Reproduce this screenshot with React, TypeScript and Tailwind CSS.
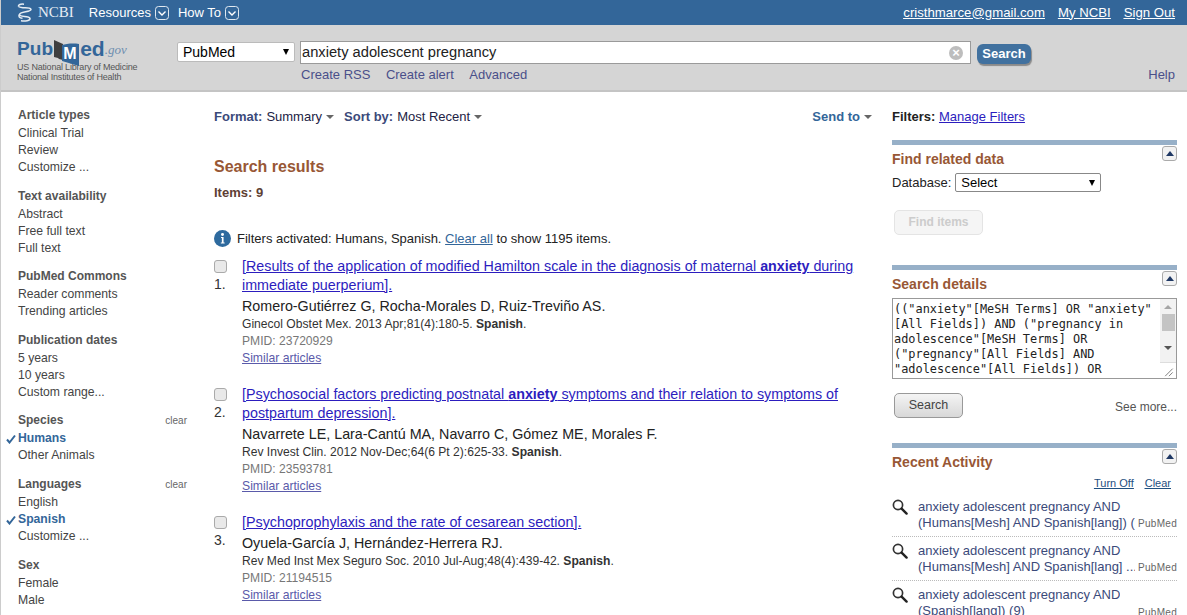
import type { ReactNode } from 'react'

const sidebar = [
  { title: 'Article types', items: ['Clinical Trial', 'Review', 'Customize ...'] },
  { title: 'Text availability', items: ['Abstract', 'Free full text', 'Full text'] },
  { title: 'PubMed Commons', items: ['Reader comments', 'Trending articles'] },
  { title: 'Publication dates', items: ['5 years', '10 years', 'Custom range...'] },
  { title: 'Species', clear: true, checked: 'Humans', items: ['Humans', 'Other Animals'] },
  { title: 'Languages', clear: true, checked: 'Spanish', items: ['English', 'Spanish', 'Customize ...'] },
  { title: 'Sex', items: ['Female', 'Male'] },
]

const results = [
  {
    title: (
      <>
        [Results of the application of modified Hamilton scale in the diagnosis of maternal <b>anxiety</b> during
        immediate puerperium].
      </>
    ),
    authors: 'Romero-Gutiérrez G, Rocha-Morales D, Ruiz-Treviño AS.',
    source: 'Ginecol Obstet Mex. 2013 Apr;81(4):180-5.',
    pmid: '23720929',
  },
  {
    title: (
      <>
        [Psychosocial factors predicting postnatal <b>anxiety</b> symptoms and their relation to symptoms of postpartum
        depression].
      </>
    ),
    authors: 'Navarrete LE, Lara-Cantú MA, Navarro C, Gómez ME, Morales F.',
    source: 'Rev Invest Clin. 2012 Nov-Dec;64(6 Pt 2):625-33.',
    pmid: '23593781',
  },
  {
    title: <>[Psychoprophylaxis and the rate of cesarean section].</>,
    authors: 'Oyuela-García J, Hernández-Herrera RJ.',
    source: 'Rev Med Inst Mex Seguro Soc. 2010 Jul-Aug;48(4):439-42.',
    pmid: '21194515',
  },
]

const activity = [
  ['anxiety adolescent pregnancy AND', '(Humans[Mesh] AND Spanish[lang]) (9)'],
  ['anxiety adolescent pregnancy AND', '(Humans[Mesh] AND Spanish[lang] ...'],
  ['anxiety adolescent pregnancy AND', '(Spanish[lang]) (9)'],
]

const details = `(("anxiety"[MeSH Terms] OR "anxiety"
[All Fields]) AND ("pregnancy in
adolescence"[MeSH Terms] OR
("pregnancy"[All Fields] AND
"adolescence"[All Fields]) OR`

function NavChevron() {
  return (
    <svg width="14" height="14" viewBox="0 0 14 14" className="ml-[4px]">
      <rect x="0.5" y="0.5" width="13" height="13" rx="3" fill="none" stroke="#dfe8f0" />
      <path d="M3.5 5.5 7 9l3.5-3.5" fill="none" stroke="#fff" strokeWidth="1.4" />
    </svg>
  )
}

function NcbiLogo() {
  return (
    <svg width="16" height="19" viewBox="0 0 16 19">
      <path
        d="M1.5 3.5c3 2.5 11 .2 12.5 2.8C14.5 9 2.5 8.5 2.5 11.5c0 2.8 9.500 1 10.500 3.800.5 2.500-5 3-9 2.500"
        fill="none"
        stroke="#e6edf4"
        strokeWidth="1.5"
      />
      <path d="M7 1.200C3.500.8 1 1.500 1.500 3.500M2.500 11.500c-1.500 2 0 3.500 3 3.800" fill="none" stroke="#e6edf4" strokeWidth="1.500" />
    </svg>
  )
}

function PubMedLogo() {
  return (
    <div className="flex h-[30px] items-end font-bold text-[#336699]">
      <span className="mb-[1px] text-[19px] leading-[22px] tracking-[0.1px]">Pub</span>
      <div className="relative mb-[-5px] ml-px h-[26px] w-[26px] shrink-0">
        <svg width="26" height="26" viewBox="0 0 26 26" className="absolute inset-0">
          <path d="M0 0 9 4v16l-4-1-1-1-4-1z" fill="#3f3f3f" />
          <path d="M8 5c4-1 10-2 17-1v22L8 21z" fill="#336699" />
        </svg>
        <span className="absolute top-[5px] left-[9px] text-[16px] leading-[18px] text-white">M</span>
      </div>
      <span className="mb-[1px] text-[21px] leading-[22px]">ed</span>
      <span className="mb-[1px] font-['Liberation_Serif',serif] text-[13px] leading-[20px] font-normal text-[#6f8fb0] italic">
        .gov
      </span>
    </div>
  )
}

function InfoIcon() {
  return (
    <svg width="17" height="17" viewBox="0 0 16 16" className="shrink-0">
      <circle cx="8" cy="8" r="8" fill="#2e6a9e" />
      <circle cx="8" cy="4.2" r="1.4" fill="#fff" />
      <path d="M6.600 6.600h2.400v5.200h1v1H6.400v-1h1V7.600h-.8z" fill="#fff" />
    </svg>
  )
}

function SearchGlass() {
  return (
    <svg width="16" height="16" viewBox="0 0 16 16" className="shrink-0">
      <circle cx="6" cy="6" r="4.600" fill="#fff" stroke="#333" strokeWidth="1.700" />
      <path d="m9.600 9.600 5 5" stroke="#222" strokeWidth="2.400" strokeLinecap="round" />
    </svg>
  )
}

function Check() {
  return (
    <svg width="10" height="10" viewBox="0 0 10 10" className="absolute left-[6px] top-[4px]">
      <path d="M1 5.500 3.500 8.500 9 1.500" fill="none" stroke="#336699" strokeWidth="2" />
    </svg>
  )
}

function Collapse() {
  return (
    <div className="flex h-[15px] w-[15px] items-center justify-center rounded-[3px] border border-[#aaaaaa] bg-[#f2f2f2]">
      <div className="h-0 w-0 border-x-[4px] border-b-[5px] border-x-transparent border-b-[#1f3864]" />
    </div>
  )
}

function PortletHead({ title, className }: { title: string; className?: string }) {
  return (
    <div className={className}>
      <div className="h-[5px] bg-[#97b0c8]" />
      <div className="flex items-start justify-between">
        <h3 className="mt-[6px] text-[14px] leading-[17px] font-bold text-[#985735]">{title}</h3>
        <div className="mt-[1px]">
          <Collapse />
        </div>
      </div>
    </div>
  )
}

function SelectBox({ label, className }: { label: string; className: string }) {
  return (
    <div className={`flex items-center justify-between bg-white px-[5px] text-[14px] text-black ${className}`}>
      <span>{label}</span>
      <span className="h-0 w-0 border-x-[3.5px] border-t-[6px] border-x-transparent border-t-black" />
    </div>
  )
}

function Sidebar() {
  return (
    <aside className="w-[213px] shrink-0 pt-[15px] pr-[27px] pl-[17px]">
      {sidebar.map((group) => (
        <div key={group.title} className="mb-[11.6px]">
          <div className="flex h-[18px] items-start justify-between leading-[17px]">
            <h4 className="text-[12px] font-bold text-[#555555]">{group.title}</h4>
            {group.clear && <span className="text-[10px] text-[#666666]">clear</span>}
          </div>
          {group.items.map((item) => (
            <div
              key={item}
              className={`relative -ml-[18px] pl-[18px] text-[12.2px] leading-[17px] ${
                item === group.checked ? 'font-bold text-[#336699]' : 'text-[#444444]'
              }`}
            >
              {item === group.checked && <Check />}
              {item}
            </div>
          ))}
        </div>
      ))}
    </aside>
  )
}

function Result({ index, r }: { index: number; r: (typeof results)[number] }) {
  return (
    <div className="mb-[18.5px] flex">
      <div className="w-[28px] shrink-0 text-[14px] text-[#333333]">
        <div className="mt-[3px] h-[13px] w-[13px] rounded-[3px] border border-[#aaaaaa] bg-[#e9e9e9]" />
        <div className="mt-[3px] leading-[17px]">{index}.</div>
      </div>
      <div className="flex-1">
        <a className="block text-[14.3px] leading-[19px] text-[#2c1dbe] underline">{r.title}</a>
        <p className="mt-[0.5px] text-[14.3px] leading-[20px] text-[#222222]">{r.authors}</p>
        <p className="text-[12.1px] leading-[17px] text-[#333333]">
          {r.source} <b>Spanish</b>.
        </p>
        <p className="text-[12.1px] leading-[17px] text-[#777777]">PMID: {r.pmid}</p>
        <a className="block text-[12.2px] leading-[17px] text-[#5a5aaa] underline">Similar articles</a>
      </div>
    </div>
  )
}

function Drop({ label, value }: { label: string; value: ReactNode }) {
  return (
    <div className="flex items-center gap-[4px]">
      <span className="font-bold text-[#3b4a7a]">{label}</span>
      <span className="text-[#222244]">{value}</span>
      <Caret />
    </div>
  )
}

function Caret() {
  return <span className="h-0 w-0 border-x-[4px] border-t-[4px] border-x-transparent border-t-[#666666]" />
}

function Main() {
  return (
    <main className="w-[658px] shrink-0 pt-[16px]">
      <div className="flex items-center justify-between text-[13px] leading-[17px]">
        <div className="flex gap-[10px]">
          <Drop label="Format:" value="Summary" />
          <Drop label="Sort by:" value="Most Recent" />
        </div>
        <div className="flex items-center gap-[4px] font-bold text-[#336699]">
          Send to <Caret />
        </div>
      </div>
      <h2 className="mt-[24px] pt-[8px] text-[16px] leading-[20px] font-bold text-[#985735]">Search results</h2>
      <p className="mt-[7px] text-[13px] leading-[17px] font-bold text-[#5e4034]">Items: 9</p>
      <div className="mt-[29px] flex items-center gap-[6px] text-[13px] leading-[17px] text-[#222222]">
        <InfoIcon />
        <span>
          Filters activated: Humans, Spanish. <a className="text-[#336699] underline">Clear all</a> to show 1195 items.
        </span>
      </div>
      <div className="mt-[10px]">
        {results.map((r, i) => (
          <Result key={r.pmid} index={i + 1} r={r} />
        ))}
      </div>
    </main>
  )
}

function RightColumn() {
  return (
    <section className="ml-[20px] w-[285px] shrink-0 pt-[16px]">
      <p className="text-[13px] leading-[17px] font-bold text-[#222222]">
        Filters: <a className="font-normal text-[#2c1dbe] underline">Manage Filters</a>
      </p>
      <PortletHead title="Find related data" className="mt-[15px]" />
      <div className="mt-[5px] flex items-center gap-[4px] text-[13px] text-[#222222]">
        Database:
        <SelectBox label="Select" className="h-[19px] w-[146px] rounded-[2px] border border-[#888888] !text-[13px]" />
      </div>
      <button className="mt-[17px] ml-[2px] h-[25px] w-[89px] rounded-[5px] border border-[#e4e4e4] bg-[#f5f5f5] text-[12px] font-bold text-[#cccccc]">
        Find items
      </button>
      <PortletHead title="Search details" className="mt-[30px]" />
      <div className="mt-[5px] flex h-[81px] overflow-hidden border border-[#999999] bg-white">
        <div className="flex-1 pt-[3px] pl-[1px] font-['DejaVu_Sans_Mono',monospace] text-[11.9px] leading-[15px] whitespace-pre text-[#222222]">
          {details}
        </div>
        <div className="flex w-[16px] flex-col items-center bg-[#f2f2f2]">
          <span className="mt-[6px] h-0 w-0 border-x-[4px] border-b-[4px] border-x-transparent border-b-[#a5a5a5]" />
          <div className="mt-[5px] h-[17px] w-[13px] bg-[#c4c4c4]" />
          <span className="mt-[15px] h-0 w-0 border-x-[4px] border-t-[4px] border-x-transparent border-t-[#555555]" />
          <svg width="16" height="16" viewBox="0 0 16 16" className="mt-auto border-t border-[#dddddd] bg-white">
            <path d="m5 14 8-8m-4 8 4-4" stroke="#777" />
          </svg>
        </div>
      </div>
      <div className="mt-[14px] flex items-end justify-between">
        <button className="ml-[2px] h-[25px] w-[69px] rounded-[5px] border border-[#999999] bg-gradient-to-b from-[#f4f4f4] to-[#d8d8d8] text-[12.5px] text-[#444444]">
          Search
        </button>
        <a className="mb-[3px] text-[12px] leading-[15px] text-[#555555]">See more...</a>
      </div>
      <PortletHead title="Recent Activity" className="mt-[25px]" />
      <div className="mt-[5px] flex justify-end gap-[11px] pr-[6px] text-[11px] leading-[15px] text-[#1f4f7f] underline">
        <a>Turn Off</a>
        <a>Clear</a>
      </div>
      <div className="mt-[8px]">
        {activity.map((lines, i) => (
          <div
            key={i}
            className="relative mb-[6px] flex h-[38px] gap-[10px] border-b border-dotted border-[#bbbbbb] last:border-b-0"
          >
            <SearchGlass />
            <div className="overflow-hidden text-[13px] leading-[16px] whitespace-nowrap text-[#3b4a7a]">
              {lines[0]}
              <br />
              {lines[1]}
            </div>
            <span className="absolute right-0 bottom-[5px] bg-white pl-[3px] text-[10px] tracking-[0.3px] text-[#666666]">
              PubMed
            </span>
          </div>
        ))}
      </div>
    </section>
  )
}

export default function App() {
  return (
    <div className="h-[615px] w-[1187px] overflow-hidden border-l border-[#cccccc] bg-white font-['Liberation_Sans',Arial,sans-serif]">
      <header className="flex h-[25px] items-center justify-between bg-[#336699] pr-[12px] pl-[16px] text-white">
        <div className="flex items-center text-[13px]">
          <NcbiLogo />
          <span className="ml-[5px] font-['Liberation_Serif',serif] text-[15px] text-[#e6edf4]">NCBI</span>
          <span className="ml-[15px]">Resources</span>
          <NavChevron />
          <span className="ml-[9px]">How To</span>
          <NavChevron />
        </div>
        <div className="flex gap-[13px] text-[13.2px] underline">
          <a>cristhmarce@gmail.com</a>
          <a>My NCBI</a>
          <a>Sign Out</a>
        </div>
      </header>
      <div className="flex h-[67px] border-b-2 border-[#c4c4c4] bg-[#d5d5d5] pr-[12px] pl-[16px]">
        <div className="w-[160px] shrink-0 pt-[6px]">
          <PubMedLogo />
          <p className="mt-[1px] text-[9px] leading-[10px] tracking-[-0.2px] text-[#555555]">
            US National Library of Medicine
            <br />
            National Institutes of Health
          </p>
        </div>
        <div className="flex-1 pt-[16px]">
          <div className="flex items-start">
            <SelectBox label="PubMed" className="mt-[1px] h-[20px] w-[118px] rounded-[2px] border border-[#bbbbbb]" />
            <div className="ml-[5px] flex h-[23px] w-[671px] items-center justify-between border border-[#9a9a9a] bg-white pr-[7px] pl-[1px] text-[14.7px] text-[#222222]">
              anxiety adolescent pregnancy
              <span className="flex h-[14px] w-[14px] items-center justify-center rounded-full bg-[#bdbdbd] text-[13px] leading-none font-bold text-white">
                ×
              </span>
            </div>
            <button className="mt-[3px] ml-[6px] h-[20px] w-[54px] rounded-[6px] bg-[#41719f] text-[13px] font-bold text-white shadow-[1px_2px_1px_#8a8a8a]">
              Search
            </button>
          </div>
          <div className="mt-[2px] flex items-center justify-between text-[13px] leading-[17px] text-[#4a4f8a]">
            <div className="ml-[124px] flex gap-[15.5px]">
              <a>Create RSS</a>
              <a>Create alert</a>
              <a>Advanced</a>
            </div>
            <a>Help</a>
          </div>
        </div>
      </div>
      <div className="flex">
        <Sidebar />
        <Main />
        <RightColumn />
      </div>
    </div>
  )
}
